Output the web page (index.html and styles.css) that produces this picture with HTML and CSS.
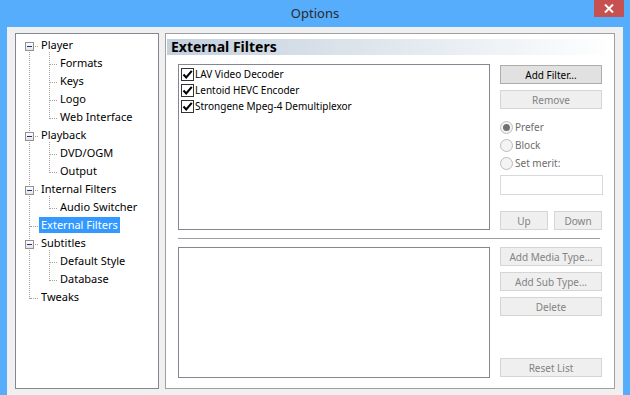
FILE: index.html
```html
<!DOCTYPE html>
<html lang="en">
<head>
  <meta charset="UTF-8">
  <title>Options</title>
  <link rel="stylesheet" href="styles.css">
</head>
<body>
  <div class="window">
    <!-- title bar -->
    <div class="titlebar">
      <span class="title">Options</span>
      <div class="close">
        <svg width="10" height="9" viewBox="0 0 10 9"><path d="M1 0.5 L9 8.5 M9 0.5 L1 8.5" stroke="#fff" stroke-width="2"/></svg>
      </div>
    </div>

    <div class="client">
      <!-- page tree -->
      <div class="tree-box">
        <ul class="tree">
          <li>
            <div class="row"><span class="twisty"></span><span class="label">Player</span></div>
            <ul>
              <li><div class="row"><span class="label">Formats</span></div></li>
              <li><div class="row"><span class="label">Keys</span></div></li>
              <li><div class="row"><span class="label">Logo</span></div></li>
              <li><div class="row"><span class="label">Web Interface</span></div></li>
            </ul>
          </li>
          <li>
            <div class="row"><span class="twisty"></span><span class="label">Playback</span></div>
            <ul>
              <li><div class="row"><span class="label">DVD/OGM</span></div></li>
              <li><div class="row"><span class="label">Output</span></div></li>
            </ul>
          </li>
          <li>
            <div class="row"><span class="twisty"></span><span class="label">Internal Filters</span></div>
            <ul>
              <li><div class="row"><span class="label">Audio Switcher</span></div></li>
            </ul>
          </li>
          <li>
            <div class="row"><span class="label selected">External Filters</span></div>
          </li>
          <li>
            <div class="row"><span class="twisty"></span><span class="label">Subtitles</span></div>
            <ul>
              <li><div class="row"><span class="label">Default Style</span></div></li>
              <li><div class="row"><span class="label">Database</span></div></li>
            </ul>
          </li>
          <li>
            <div class="row"><span class="label">Tweaks</span></div>
          </li>
        </ul>
      </div>

      <!-- property page -->
      <div class="page">
        <div class="page-header">External Filters</div>

        <div class="section top">
          <div class="listbox">
            <div class="item"><span class="check"><svg width="11" height="11" viewBox="0 0 11 11"><path d="M1.5 5.5 L4.2 8.5 L9.8 1.8" fill="none" stroke="#000" stroke-width="2"/></svg></span>LAV Video Decoder</div>
            <div class="item"><span class="check"><svg width="11" height="11" viewBox="0 0 11 11"><path d="M1.5 5.5 L4.2 8.5 L9.8 1.8" fill="none" stroke="#000" stroke-width="2"/></svg></span>Lentoid HEVC Encoder</div>
            <div class="item"><span class="check"><svg width="11" height="11" viewBox="0 0 11 11"><path d="M1.5 5.5 L4.2 8.5 L9.8 1.8" fill="none" stroke="#000" stroke-width="2"/></svg></span>Strongene Mpeg-4 Demultiplexor</div>
          </div>
          <div class="side">
            <button class="btn">Add Filter...</button>
            <button class="btn" disabled>Remove</button>
            <div class="radios">
              <div class="radio"><span class="dot on"></span>Prefer</div>
              <div class="radio"><span class="dot"></span>Block</div>
              <div class="radio"><span class="dot"></span>Set merit:</div>
            </div>
            <input class="merit" type="text" disabled>
            <div class="updown">
              <button class="btn" disabled>Up</button>
              <button class="btn" disabled>Down</button>
            </div>
          </div>
        </div>

        <div class="sep"></div>

        <div class="section bottom">
          <div class="listbox"></div>
          <div class="side">
            <button class="btn" disabled>Add Media Type...</button>
            <button class="btn" disabled>Add Sub Type...</button>
            <button class="btn" disabled>Delete</button>
            <button class="btn reset" disabled>Reset List</button>
          </div>
        </div>
      </div>
    </div>
  </div>
</body>
</html>
```

FILE: styles.css
```css
* {
  box-sizing: border-box;
}

body {
  margin: 0;
  width: 630px;
  height: 395px;
  overflow: hidden;
  background: #56adfb;
  font-family: "Noto Sans", "Open Sans", sans-serif;
  font-size: 10px;
  color: #000;
}

.window {
  height: 395px;
  display: flex;
  flex-direction: column;
}

/* title bar */
.titlebar {
  position: relative;
  height: 27px;
  display: flex;
  justify-content: center;
  align-items: center;
}

.title {
  font-size: 13px;
  color: #2b2b2b;
  margin-top: -1px;
}

.close {
  position: absolute;
  top: 0;
  right: 6px;
  width: 30px;
  height: 17px;
  background: #c75050;
  display: flex;
  justify-content: center;
  align-items: center;
}

/* client area */
.client {
  flex: 1;
  margin: 0 7px;
  padding: 6px 8px;
  background: #f0f0f0;
  display: flex;
  gap: 6px;
}

/* tree */
.tree-box {
  width: 144px;
  border: 1px solid #828790;
  background: #fff;
  font-size: 11px;
}

.tree,
.tree ul {
  list-style: none;
  margin: 0;
  padding: 0;
  position: relative;
}

.tree {
  padding-top: 2px;
}

.tree::before {
  content: '';
  position: absolute;
  left: 13px;
  top: 12px;
  bottom: 7px;
  border-left: 1px dotted #a0a0a0;
}

.tree ul::before {
  content: '';
  position: absolute;
  left: 33px;
  top: -2px;
  bottom: 7px;
  border-left: 1px dotted #a0a0a0;
}

.row {
  position: relative;
  height: 18px;
  display: flex;
  align-items: center;
}

.tree > li > .row {
  padding-left: 23px;
}

.tree > li > .row::before {
  content: '';
  position: absolute;
  left: 14px;
  width: 8px;
  top: 10px;
  border-top: 1px dotted #a0a0a0;
}

.tree ul .row {
  padding-left: 42px;
}

.tree ul .row::before {
  content: '';
  position: absolute;
  left: 34px;
  width: 7px;
  top: 10px;
  border-top: 1px dotted #a0a0a0;
}

.twisty {
  position: absolute;
  left: 9px;
  top: 6px;
  width: 9px;
  height: 9px;
  border: 1px solid #919191;
  background: linear-gradient(#fff, #e2e2e2);
  z-index: 1;
}

.twisty::after {
  content: '';
  position: absolute;
  left: 1px;
  top: 3px;
  width: 5px;
  height: 1px;
  background: #1c3386;
}

.label {
  height: 16px;
  line-height: 16px;
  padding: 0 2px;
  white-space: nowrap;
}

.label.selected {
  background: #3399ff;
  color: #fff;
}

/* property page */
.page {
  width: 450px;
  border: 1px solid #a0a0a0;
  background: #fff;
  padding: 5px 0 10px 1px;
  display: flex;
  flex-direction: column;
}

.page-header {
  height: 16px;
  line-height: 16px;
  padding-left: 4px;
  font-size: 14px;
  font-weight: bold;
  background: linear-gradient(to right, #c3d0dd, #fff);
}

.section {
  display: flex;
  gap: 10px;
  margin-left: 11px;
}

.section.top {
  margin-top: 9px;
}

.section.bottom {
  flex: 1;
}

.listbox {
  width: 312px;
  border: 1px solid #828790;
  background: #fff;
  padding: 1px 0 0 2px;
}

.top .listbox {
  height: 166px;
}

.item {
  height: 16px;
  display: flex;
  align-items: center;
  gap: 1px;
  white-space: nowrap;
}

.check {
  width: 13px;
  height: 13px;
  border: 1px solid #333;
  background: #fff;
  display: flex;
  justify-content: center;
  align-items: center;
}

.side {
  width: 102px;
  display: flex;
  flex-direction: column;
  gap: 6px;
}

.top .side {
  padding-top: 1px;
}

.btn {
  height: 19px;
  padding: 0;
  border: 1px solid #adadad;
  background: #e1e1e1;
  font-family: inherit;
  font-size: 10px;
  color: #000;
}

.btn:disabled {
  border-color: #d5d5d5;
  background: #efefef;
  color: #838383;
}

.radios {
  margin-top: 3px;
  display: flex;
  flex-direction: column;
}

.radio {
  height: 18px;
  display: flex;
  align-items: center;
  gap: 2px;
  color: #6d6d6d;
}

.dot {
  width: 13px;
  height: 13px;
  border: 1px solid #bcbcbc;
  border-radius: 50%;
  background: #f4f4f4;
  display: flex;
  justify-content: center;
  align-items: center;
}

.dot.on::after {
  content: '';
  width: 7px;
  height: 7px;
  border-radius: 50%;
  background: #707070;
}

.merit {
  margin-top: -3px;
  width: 103px;
  height: 20px;
  border: 1px solid #d9d9d9;
  background: #fff;
}

.updown {
  margin-top: auto;
  display: flex;
  justify-content: space-between;
}

.updown .btn {
  width: 48px;
}

.sep {
  width: 422px;
  margin: 8px 0 8px 11px;
  border-top: 1px solid #a0a0a0;
}

.bottom .side .reset {
  margin-top: auto;
  margin-bottom: 1px;
}
```
